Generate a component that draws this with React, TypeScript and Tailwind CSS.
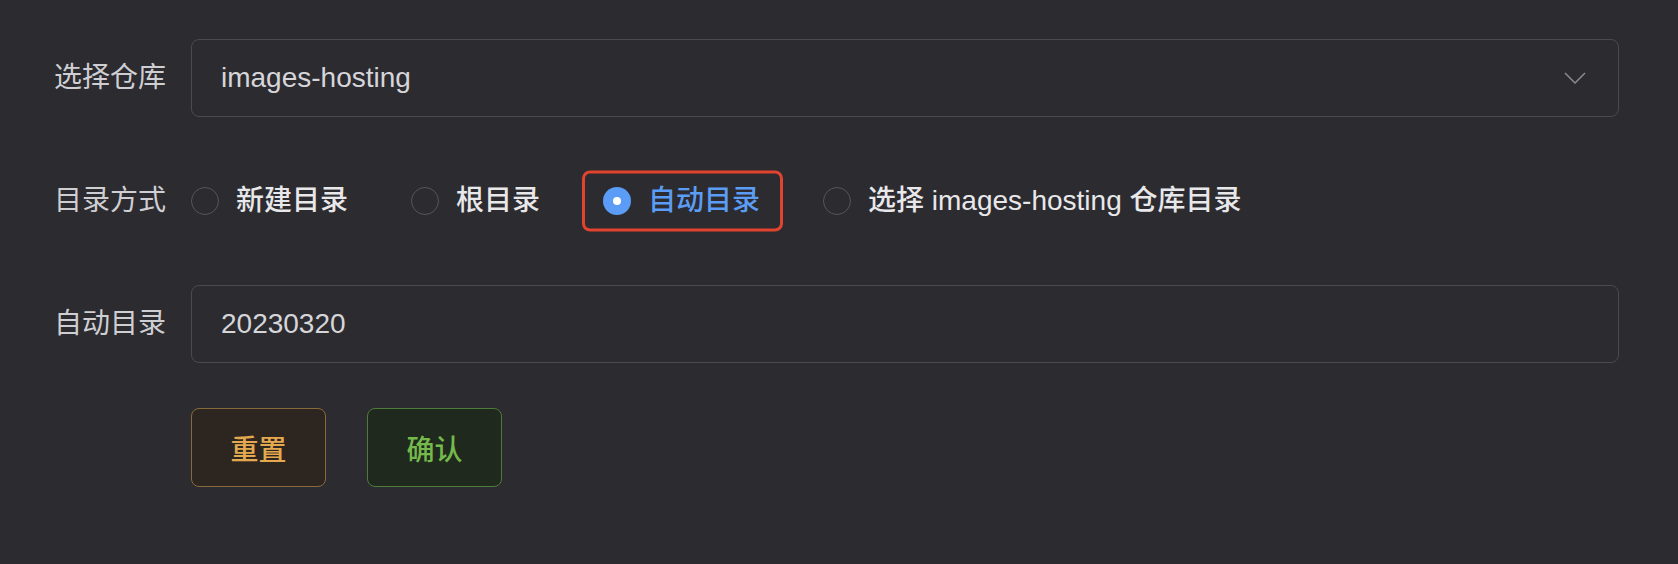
import React from "react";

const font = { fontFamily: '"Liberation Sans", "Noto Sans CJK SC", sans-serif' };

function Radio({ label, checked = false, annotate = false }: { label: string; checked?: boolean; annotate?: boolean }) {
  return (
    <div className="relative flex items-center gap-[17px]">
      {annotate && (
        <span className="pointer-events-none absolute -left-[21px] -right-[23px] top-1/2 h-[61px] -translate-y-1/2 rounded-[8px] border-[3.5px] border-[#e2432f]" />
      )}
      {checked ? (
        <span className="flex h-[28px] w-[28px] items-center justify-center rounded-full bg-[#5b9cf6]">
          <span className="h-[8px] w-[8px] rounded-full bg-white" />
        </span>
      ) : (
        <span className="h-[28px] w-[28px] rounded-full border-[1.5px] border-[#55555a]" />
      )}
      <span
        className={`font-['Liberation_Sans','Noto_Sans_CJK_SC_Medium','Noto_Sans_CJK_SC',sans-serif] text-[28px] font-normal leading-none ${checked ? "text-[#5b9df4]" : "text-[#e8e8ea]"}`}
      >
        {label}
      </span>
    </div>
  );
}

function Label({ children }: { children: React.ReactNode }) {
  return <div className="w-[112px] shrink-0 text-right text-[28px] leading-none text-[#cfcfd3]">{children}</div>;
}

export default function App() {
  return (
    <div className="min-h-screen w-full bg-[#2c2b30] pt-[39px] pl-[54px] pr-[59px]" style={font}>
      <div className="flex flex-col gap-[45px]">
        <div className="flex h-[78px] items-center gap-[25px]">
          <Label>选择仓库</Label>
          <div className="flex h-[78px] flex-1 items-center justify-between rounded-[8px] border-[1.5px] border-[#4a4a50] pl-[29px] pr-[32px]">
            <span className="text-[28px] leading-none text-[#d6d6da]">images-hosting</span>
            <svg width="22" height="12" viewBox="0 0 22 12" fill="none">
              <path d="M1 1 L11 11 L21 1" stroke="#8a8a8f" strokeWidth="1.5" />
            </svg>
          </div>
        </div>

        <div className="flex h-[78px] items-center gap-[25px]">
          <Label>目录方式</Label>
          <div className="flex items-center gap-[63px]">
            <Radio label="新建目录" />
            <Radio label="根目录" />
            <Radio label="自动目录" checked annotate />
            <Radio label="选择 images-hosting 仓库目录" />
          </div>
        </div>

        <div className="flex h-[78px] items-center gap-[25px]">
          <Label>自动目录</Label>
          <div className="flex h-[78px] flex-1 items-center rounded-[8px] border-[1.5px] border-[#4a4a50] pl-[29px]">
            <span className="text-[28px] leading-none text-[#d6d6da]">20230320</span>
          </div>
        </div>

        <div className="flex items-center gap-[25px]">
          <div className="w-[112px] shrink-0" />
          <div className="flex gap-[41px]">
            <button className="flex h-[79px] w-[135px] items-center justify-center rounded-[8px] border-[1.5px] border-[#876a3c] bg-[#2d2620] font-['Noto_Sans_CJK_SC_Medium','Noto_Sans_CJK_SC',sans-serif] text-[28px] font-normal text-[#e4a94f]">
              重置
            </button>
            <button className="flex h-[79px] w-[135px] items-center justify-center rounded-[8px] border-[1.5px] border-[#4e7a3b] bg-[#1f291d] font-['Noto_Sans_CJK_SC_Medium','Noto_Sans_CJK_SC',sans-serif] text-[28px] font-normal text-[#75b94c]">
              确认
            </button>
          </div>
        </div>
      </div>
    </div>
  );
}
